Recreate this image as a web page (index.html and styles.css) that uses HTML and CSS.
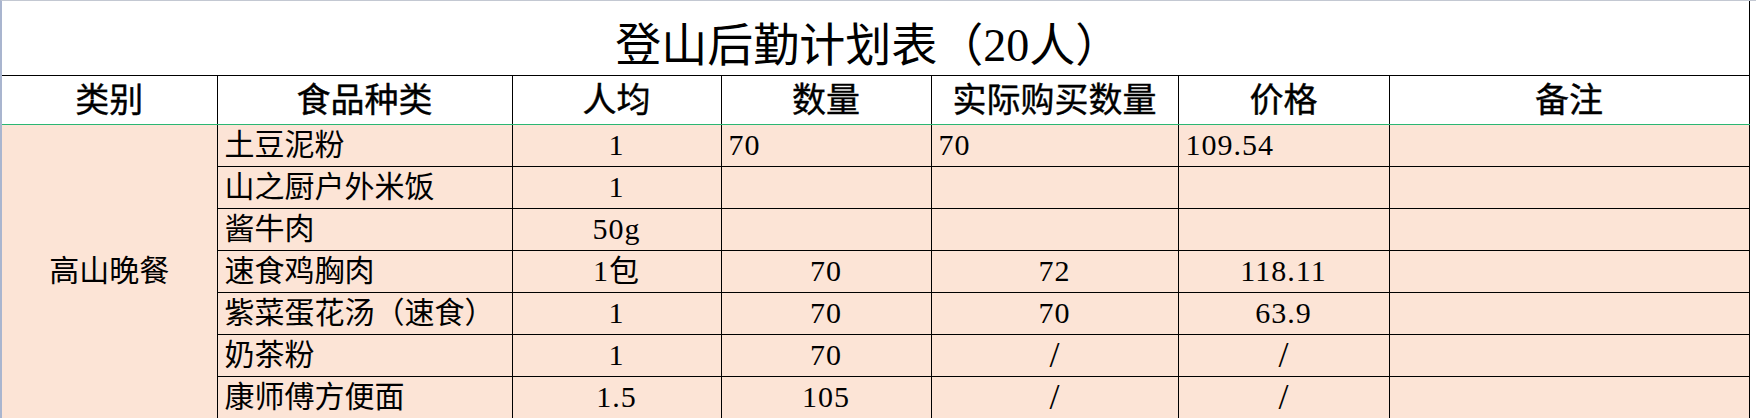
FILE: index.html
```html
<!DOCTYPE html>
<html lang="zh-CN">
<head>
<meta charset="utf-8">
<title>登山后勤计划表（20人）</title>
<link rel="stylesheet" href="styles.css">
</head>
<body>
<div class="sheet">
  <table class="plan">
    <colgroup>
      <col class="c1"><col class="c2"><col class="c3"><col class="c4"><col class="c5"><col class="c6"><col class="c7">
    </colgroup>
    <tr class="title-row">
      <td colspan="7" class="title">登山后勤计划表（20人）</td>
    </tr>
    <tr class="head-row">
      <th>类别</th><th>食品种类</th><th>人均</th><th>数量</th><th>实际购买数量</th><th>价格</th><th>备注</th>
    </tr>
    <tr class="row">
      <td rowspan="7" class="cat">高山晚餐</td>
      <td class="name">土豆泥粉</td>
      <td class="ctr num">1</td>
      <td class="lft num">70</td>
      <td class="lft num">70</td>
      <td class="lft num">109.54</td>
      <td></td>
    </tr>
    <tr class="row">
      <td class="name">山之厨户外米饭</td>
      <td class="ctr num">1</td>
      <td></td><td></td><td></td><td></td>
    </tr>
    <tr class="row">
      <td class="name">酱牛肉</td>
      <td class="ctr num">50g</td>
      <td></td><td></td><td></td><td></td>
    </tr>
    <tr class="row">
      <td class="name">速食鸡胸肉</td>
      <td class="ctr num">1包</td>
      <td class="ctr num">70</td>
      <td class="ctr num">72</td>
      <td class="ctr num">118.11</td>
      <td></td>
    </tr>
    <tr class="row">
      <td class="name">紫菜蛋花汤（速食）</td>
      <td class="ctr num">1</td>
      <td class="ctr num">70</td>
      <td class="ctr num">70</td>
      <td class="ctr num">63.9</td>
      <td></td>
    </tr>
    <tr class="row">
      <td class="name">奶茶粉</td>
      <td class="ctr num">1</td>
      <td class="ctr num">70</td>
      <td class="ctr slash">/</td>
      <td class="ctr slash">/</td>
      <td></td>
    </tr>
    <tr class="row">
      <td class="name">康师傅方便面</td>
      <td class="ctr num">1.5</td>
      <td class="ctr num">105</td>
      <td class="ctr slash">/</td>
      <td class="ctr slash">/</td>
      <td></td>
    </tr>
    <tr class="row tail">
      <td class="blank"></td><td></td><td></td><td></td><td></td><td></td><td></td>
    </tr>
  </table>
</div>
</body>
</html>
```

FILE: styles.css
```css
html, body {
  margin: 0;
  padding: 0;
  background: #ffffff;
  overflow: hidden;
}
body {
  width: 1756px;
  height: 419px;
}
.sheet {
  border-left: 2px solid #a9b5cf;
  border-top: 1px solid #c3c8d2;
  height: 418px;
  overflow: hidden;
  box-sizing: border-box;
}
.plan {
  border-collapse: collapse;
  table-layout: fixed;
  width: 1747px;
  font-family: "Liberation Serif", "Noto Sans CJK SC", serif;
  color: #000;
}
.c1 { width: 215px; }
.c2 { width: 295px; }
.c3 { width: 209px; }
.c4 { width: 210px; }
.c5 { width: 247px; }
.c6 { width: 211px; }
.c7 { width: 360px; }

.plan td, .plan th {
  border: 1px solid #000;
  padding: 0;
  overflow: hidden;
  white-space: nowrap;
}
.title-row td {
  border-top: none;
  border-left: none;
}
.title {
  height: 74px;
  text-align: center;
  font-size: 46px;
  font-weight: 400;
  padding-top: 6px !important;
  box-sizing: border-box;
  padding-right: 14px !important;
}
.head-row th {
  height: 45px;
  font-size: 34px;
  font-weight: 400;
  -webkit-text-stroke: 0.4px #000;
  text-align: center;
  background: #fff;
  border-bottom: 1px solid #2bb673;
  line-height: 1;
  padding-top: 3px;
}
.head-row th:first-child { border-left: none; }
.row td {
  height: 41px;
  background: #fce4d6;
  font-size: 30px;
  line-height: 1;
  font-weight: 400;
  vertical-align: middle;
}
.row td:first-child { border-left: none; }
.cat {
  text-align: center;
  padding-left: 0;
}
.name {
  text-align: left;
  padding-left: 7px !important;
}
.num {
  font-size: 31px;
  letter-spacing: 1px;
}
.row td.slash {
  font-size: 36px;
  line-height: 38px;
  font-weight: 300;
  overflow: visible;
}
.ctr { text-align: center; }
.lft {
  text-align: left;
  padding-left: 7px !important;
}
.tail td { background: #fce4d6; }
.tail td.blank { background: #ffffff; }
```
